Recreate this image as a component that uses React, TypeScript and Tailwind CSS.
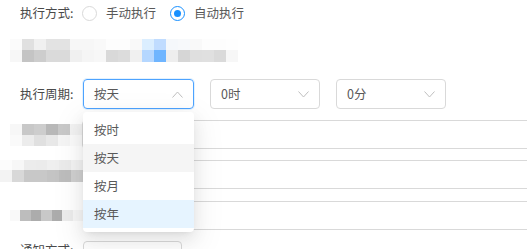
import * as React from "react";

const FONT = { fontFamily: '"Noto Sans CJK SC", "Noto Sans", sans-serif' };

type MosaicProps = { rows: string[][]; heights: number[]; x: number; cell?: number };

// pixelated (redacted) label blocks
function Mosaic({ rows, heights, x, cell = 12 }: MosaicProps) {
  return (
    <div className="flex flex-col" style={{ marginLeft: x }}>
      {rows.map((r, i) => (
        <div key={i} className="flex" style={{ height: heights[i] }}>
          {r.map((c, j) => (
            <div key={j} style={{ width: cell, background: c }} />
          ))}
        </div>
      ))}
    </div>
  );
}

function Chevron({ up = false }: { up?: boolean }) {
  return (
    <svg width="11" height="7" viewBox="0 0 11 7" className="text-[#bfbfbf]">
      <path
        d={up ? "M0.5 6.5 L5.5 1 L10.5 6.5" : "M0.5 0.5 L5.5 6 L10.5 0.5"}
        fill="none"
        stroke="currentColor"
        strokeWidth="1"
      />
    </svg>
  );
}

function Radio({ checked, label }: { checked?: boolean; label: string }) {
  return (
    <label className="flex items-center">
      <span
        className={
          "flex h-[15px] w-[15px] items-center justify-center rounded-full border bg-white " +
          (checked ? "border-[#1890ff]" : "border-[#d9d9d9]")
        }
      >
        {checked && <span className="h-[7px] w-[7px] rounded-full bg-[#1890ff]" />}
      </span>
      <span className="ml-[9px] text-[12.5px] text-[#595959]">{label}</span>
    </label>
  );
}

const options = ["按时", "按天", "按月", "按年"];

export default function App() {
  return (
    <div className="h-[249px] w-full overflow-hidden bg-white" style={FONT}>
      {/* 执行方式 */}
      <div className="flex h-[26px] items-center pl-[20px]">
        <span className="w-[62px] text-[12.5px] text-[#4a4a4a]">执行方式:</span>
        <Radio label="手动执行" />
        <span className="w-[14px]" />
        <Radio checked label="自动执行" />
      </div>

      <div className="mt-[13px]">
        <Mosaic
          x={10}
          heights={[11, 12]}
          rows={[
            ["#fbfbfb", "#e0e0e0", "#f0f0f0", "#e3e3e3", "#e3e3e3", "#f7f7f7", "#f7f7f7", "#f9f9f9", "#fdfdfd", "#fdfdfd", "#f9f9f9", "#dbeeff", "#c0dcff", "#f5f8fb", "#f7f9fb", "#f9f9f9", "#fdfdfd", "#fdfdfd", "#fefefe"],
            ["#f7f7f7", "#c4c4c4", "#cdcdcd", "#dadada", "#dadada", "#f0f0f0", "#f5f5f5", "#f7f7f7", "#d9d9d9", "#dcdcdc", "#f0f0f0", "#b5d7ff", "#6fb5ff", "#eeeeee", "#d6d6d6", "#dfdfdf", "#e0e0e0", "#dadada", "#f7f7f7"],
          ]}
        />
      </div>

      {/* 执行周期 */}
      <div className="mt-[17px] flex items-center pl-[20px]">
        <span className="w-[63px] text-[12.5px] text-[#4a4a4a]">执行周期:</span>
        <div className="relative">
          <div className="flex h-[30px] w-[111px] items-center justify-between rounded-[4px] border border-[#4da3ff] pl-[10px] pr-[10px] shadow-[0_0_0_1px_rgba(24,144,255,0.12)]">
            <span className="text-[12.5px] text-[#595959]">按天</span>
            <Chevron up />
          </div>
          <div className="absolute left-0 top-[calc(100%+3px)] z-10 w-[111px] rounded-[4px] bg-white py-[4px] shadow-[0_3px_6px_-4px_rgba(0,0,0,0.12),0_6px_16px_0_rgba(0,0,0,0.08),0_9px_28px_8px_rgba(0,0,0,0.05)]">
            {options.map((o) => (
              <div
                key={o}
                className={
                  "flex h-[28px] items-center pl-[11px] text-[12.5px] text-[#595959] " +
                  (o === "按天" ? "bg-[#f5f5f5]" : o === "按年" ? "bg-[#e6f4ff]" : "")
                }
              >
                {o}
              </div>
            ))}
          </div>
        </div>
        <div className="ml-[16px] flex h-[30px] w-[110px] items-center justify-between rounded-[4px] border border-[#d9d9d9] pl-[10px] pr-[10px]">
          <span className="text-[12.5px] text-[#595959]">0时</span>
          <Chevron />
        </div>
        <div className="ml-[16px] flex h-[30px] w-[110px] items-center justify-between rounded-[4px] border border-[#d9d9d9] pl-[10px] pr-[10px]">
          <span className="text-[12.5px] text-[#595959]">0分</span>
          <Chevron />
        </div>
      </div>

      {/* redacted rows */}
      <div className="mt-[11px] flex items-center">
        <div className="w-[83px]">
          <Mosaic
            x={10}
            heights={[11, 11]}
            rows={[
              ["#f7f7f7", "#c8c8c8", "#cdcdcd", "#b8b8b8", "#c8c8c8", "#f3f3f3"],
              ["#fafafa", "#ececec", "#e0e0e0", "#e8e8e8", "#f5f5f5", "#fbfbfb"],
            ]}
          />
        </div>
        <div className="h-[29px] w-[600px] shrink-0 rounded-[4px] border border-[#d9d9d9]" />
      </div>

      <div className="mt-[11px] flex items-start">
        <div className="w-[83px]">
          <Mosaic
            x={0}
            cell={12}
            heights={[10, 12]}
            rows={[
              ["#fcfcfc", "#f7f7f7", "#ececec", "#ebebeb", "#efefef", "#ebebeb", "#f3f3f3"],
              ["#f3f3f3", "#d8d8d8", "#c8c8c8", "#c8c8c8", "#c4c4c4", "#bdbdbd", "#d0d0d0"],
            ]}
          />
        </div>
        <div className="h-[29px] w-[600px] shrink-0 rounded-[4px] border border-[#d9d9d9]" />
      </div>

      <div className="mt-[12px] flex items-center">
        <div className="w-[83px]">
          <Mosaic
            x={10}
            heights={[11]}
            rows={[["#f9f9f9", "#bdbdbd", "#acacac", "#c8c8c8", "#acacac", "#ececec", "#f7f7f7"]]}
          />
        </div>
        <div className="h-[29px] w-[600px] shrink-0 rounded-[4px] border border-[#d9d9d9]" />
      </div>

      <div className="mt-[11px] flex items-start pl-[20px]">
        <span className="mt-[3px] w-[63px] text-[12.5px] leading-none text-[#4a4a4a]">通知方式:</span>
        <div className="h-[29px] w-[99px] rounded-[4px] border border-[#d9d9d9]" />
      </div>
    </div>
  );
}
